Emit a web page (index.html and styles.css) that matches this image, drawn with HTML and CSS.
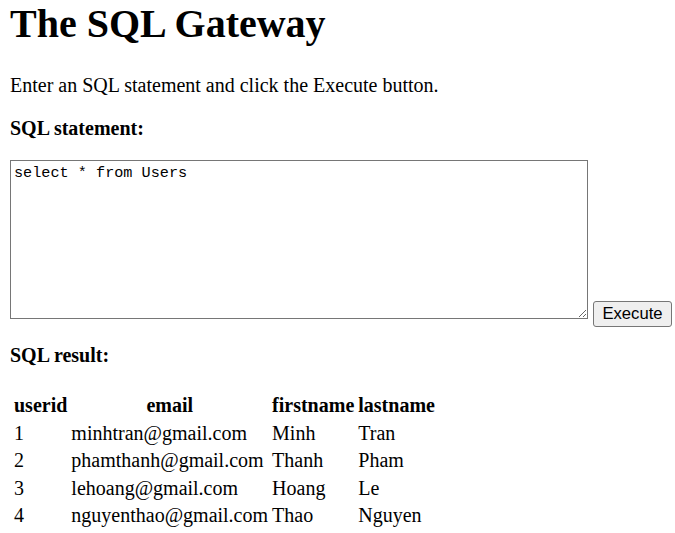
FILE: index.html
```html
<!DOCTYPE html>
<html>
<head>
<meta charset="utf-8">
<title>The SQL Gateway</title>
<link rel="stylesheet" href="styles.css">
</head>
<body>
<h1 class="title">The SQL Gateway</h1>
<p class="text">Enter an SQL statement and click the Execute button.</p>
<p class="text"><b>SQL statement:</b></p>
<form class="sql-form">
  <textarea class="sql-input">select * from Users</textarea>
  <button type="button" class="exec-btn">Execute</button>
</form>
<p class="text result-label"><b>SQL result:</b></p>
<table class="result">
  <tr><th>userid</th><th>email</th><th>firstname</th><th>lastname</th></tr>
  <tr><td>1</td><td>minhtran@gmail.com</td><td>Minh</td><td>Tran</td></tr>
  <tr><td>2</td><td>phamthanh@gmail.com</td><td>Thanh</td><td>Pham</td></tr>
  <tr><td>3</td><td>lehoang@gmail.com</td><td>Hoang</td><td>Le</td></tr>
  <tr><td>4</td><td>nguyenthao@gmail.com</td><td>Thao</td><td>Nguyen</td></tr>
</table>
</body>
</html>
```
FILE: styles.css
```css
html, body {
  background: #fff;
}
html {
  overflow: hidden;
}
body {
  margin: 0 0 0 10px;
  font-family: "Liberation Serif", "Times New Roman", serif;
  font-size: 20px;
  color: #000;
}
.title {
  font-size: 40px;
  font-weight: bold;
  margin: 0 0 26.8px 0;
}
.text {
  margin: 20px 0;
}
.sql-form {
  display: flex;
  align-items: flex-end;
  margin: 0;
}
.sql-input {
  flex-shrink: 0;
  box-sizing: border-box;
  width: 578px;
  height: 159px;
  margin: 0 0 8px 0;
  padding: 3px 3px;
  border: 1px solid #767676;
  font-family: "Liberation Mono", "DejaVu Sans Mono", monospace;
  font-size: 15.2px;
  color: #000;
  background: #fff;
}
.exec-btn {
  flex-shrink: 0;
  box-sizing: border-box;
  width: 79px;
  height: 26px;
  margin: 0 0 0 5px;
  padding: 0 6px;
  font-family: "Liberation Sans", Arial, sans-serif;
  font-size: 16.67px;
  color: #000;
  background: #efefef;
  border: 1px solid #767676;
  border-radius: 3px;
}
.result-label {
  margin-top: 17px;
  margin-bottom: 23px;
}
.result {
  border-collapse: separate;
  border-spacing: 2.5px 3px;
  margin: 0 0 0 1px;
}
.result th, .result td {
  padding: 1.25px 1px;
  font-size: 20px;
  line-height: 22px;
}
.result td {
  text-align: left;
}
```
